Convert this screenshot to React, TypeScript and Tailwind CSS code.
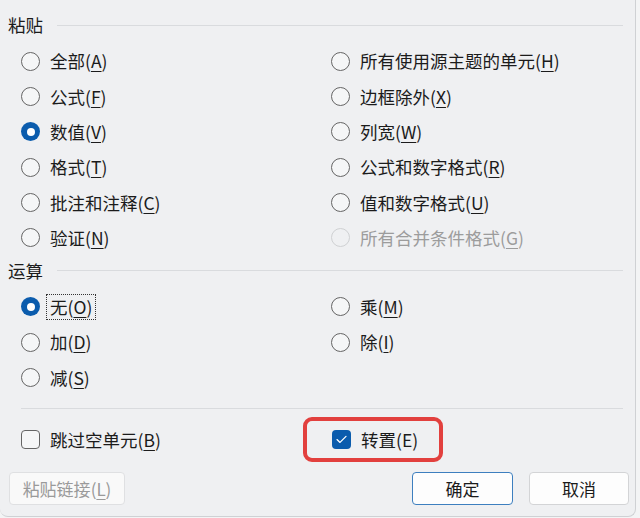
import type { ReactNode } from "react";

type Opt = { label: string; key: string; checked?: boolean; disabled?: boolean; focus?: boolean };

const font = { fontFamily: '"Noto Sans CJK SC", "Noto Sans", sans-serif' };

function Label({ label, k }: { label: string; k: string }) {
    return (
        <>
            {label}(<span className="underline underline-offset-[3px] decoration-1">{k}</span>)
        </>
    );
}

function Radio({ opt }: { opt: Opt }) {
    return (
        <div className="flex items-center h-[35.3px]">
            {opt.checked ? (
                <span className="w-[19px] h-[19px] rounded-full bg-[#0b5cad] flex items-center justify-center shrink-0">
                    <span className="w-[8px] h-[8px] rounded-full bg-white" />
                </span>
            ) : (
                <span
                    className={`w-[19px] h-[19px] rounded-full border shrink-0 ${opt.disabled ? "border-[#cfd1d3]" : "border-[#656565] bg-[#f5f6f7]"}`}
                />
            )}
            <span
                className={`ml-[10px] ${opt.focus ? "outline outline-1 outline-dotted outline-[#333] outline-offset-[3px]" : ""} ${opt.disabled ? "text-[#9c9c9c]" : "text-[#1b1b1b]"}`}
            >
                <Label label={opt.label} k={opt.key} />
            </span>
        </div>
    );
}

function Heading({ children }: { children: ReactNode }) {
    return (
        <div className="flex items-center h-[30px] pl-[8px] pr-[12px]">
            <span className="text-[#1b1b1b]">{children}</span>
            <div className="flex-1 ml-[14px] h-px bg-[#d9dbde]" />
        </div>
    );
}

function RadioGrid({ left, right }: { left: Opt[]; right: Opt[] }) {
    return (
        <div className="grid grid-cols-[310px_1fr] pl-[21px]">
            <div>{left.map(o => <Radio key={o.key} opt={o} />)}</div>
            <div>{right.map(o => <Radio key={o.key} opt={o} />)}</div>
        </div>
    );
}

const pasteLeft: Opt[] = [
    { label: "全部", key: "A" },
    { label: "公式", key: "F" },
    { label: "数值", key: "V", checked: true },
    { label: "格式", key: "T" },
    { label: "批注和注释", key: "C" },
    { label: "验证", key: "N" },
];

const pasteRight: Opt[] = [
    { label: "所有使用源主题的单元", key: "H" },
    { label: "边框除外", key: "X" },
    { label: "列宽", key: "W" },
    { label: "公式和数字格式", key: "R" },
    { label: "值和数字格式", key: "U" },
    { label: "所有合并条件格式", key: "G", disabled: true },
];

const opLeft: Opt[] = [
    { label: "无", key: "O", checked: true, focus: true },
    { label: "加", key: "D" },
    { label: "减", key: "S" },
];

const opRight: Opt[] = [
    { label: "乘", key: "M" },
    { label: "除", key: "I" },
];

export default function App() {
    return (
        <div className="w-[640px] h-[518px] bg-[#f3f4f5] overflow-hidden" style={font}>
            <div className="w-[636px] h-[517px] bg-[#eff0f2] border-r border-b border-[#cfd1d4] rounded-b-[8px] text-[17.5px] leading-none pt-[10px]">
                <Heading>粘贴</Heading>
                <div className="h-[3.5px]" />
                <RadioGrid left={pasteLeft} right={pasteRight} />
                <Heading>运算</Heading>
                <div className="h-[4px]" />
                <RadioGrid left={opLeft} right={opRight} />

                <div className="mt-[13px] ml-[21px] mr-[12px] h-px bg-[#d9dbde]" />

                {/* skip blanks / transpose */}
                <div className="grid grid-cols-[282px_1fr] pl-[21px] mt-[8px] h-[45px]">
                    <div className="flex items-center">
                        <span className="w-[19px] h-[19px] rounded-[4px] border border-[#656565] bg-[#f5f6f7]" />
                        <span className="ml-[10px] text-[#1b1b1b]">
                            <Label label="跳过空单元" k="B" />
                        </span>
                    </div>
                    <div className="flex items-center w-[140px] h-[45px] border-[4px] border-[#e2403e] rounded-[9px] pl-[25px]">
                        <span className="w-[19px] h-[19px] rounded-[4px] bg-[#0b5cad] flex items-center justify-center">
                            <svg width="11" height="9" viewBox="0 0 11 9" fill="none">
                                <path d="M1 4.6 L4 7.4 L10 1.4" stroke="white" strokeWidth="1.3" strokeLinecap="round" strokeLinejoin="round" />
                            </svg>
                        </span>
                        <span className="ml-[10px] text-[#1b1b1b]">转置(E)</span>
                    </div>
                </div>

                {/* buttons */}
                <div className="flex items-center pl-[9px] pr-[6px] mt-[10px]">
                    <button className="w-[116px] h-[33px] rounded-[4px] border border-[#dfe0e2] bg-[#f9f9f9] text-[#9a9a9a] text-[17px]">
                        <Label label="粘贴链接" k="L" />
                    </button>
                    <div className="flex-1" />
                    <button className="w-[101px] h-[33px] rounded-[4px] border border-[#3d7fbf] bg-[#fdfdfd] text-[#1b1b1b] text-[17px]">
                        确定
                    </button>
                    <button className="ml-[16px] w-[100px] h-[33px] rounded-[4px] border border-[#d3d4d6] bg-[#fdfdfd] text-[#1b1b1b] text-[17px]">
                        取消
                    </button>
                </div>
            </div>
        </div>
    );
}
